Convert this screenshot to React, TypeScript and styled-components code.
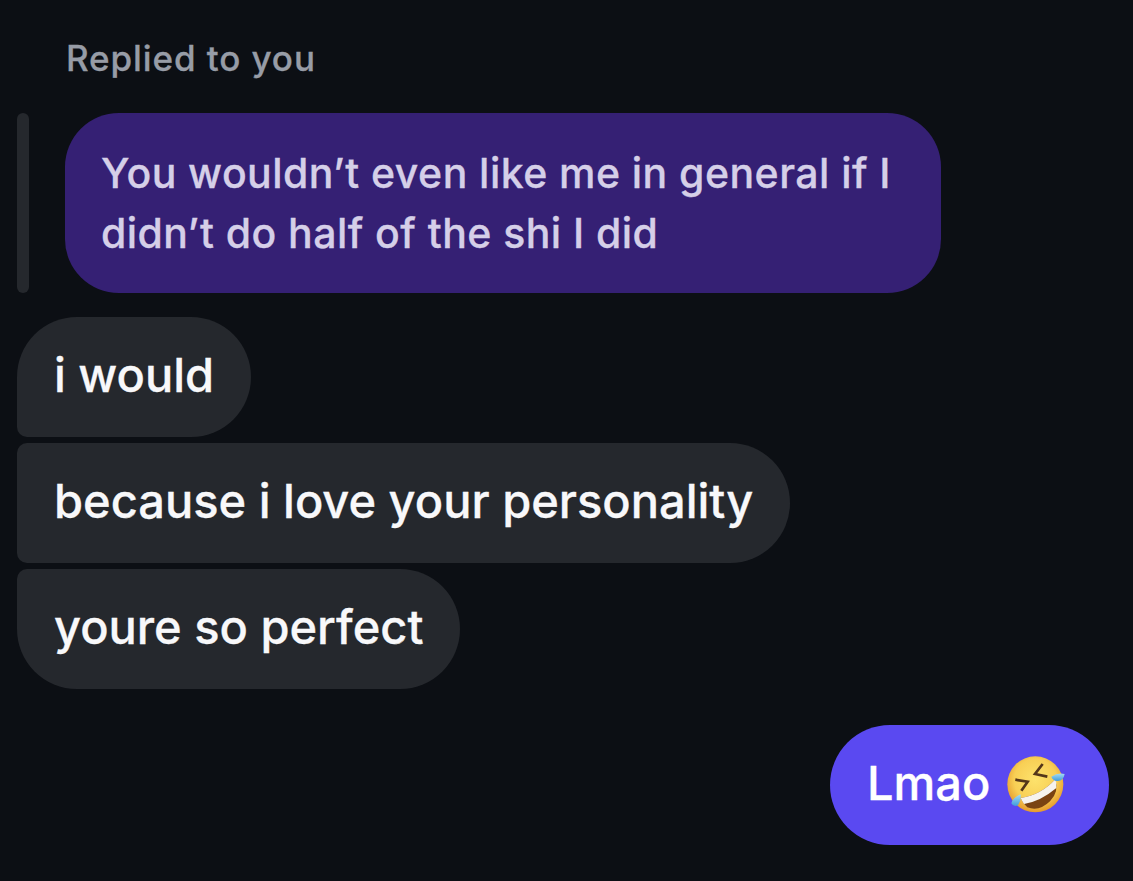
import React from 'react'
import styled, { createGlobalStyle } from 'styled-components'

const GlobalStyle = createGlobalStyle`
  html, body {
    margin: 0;
    padding: 0;
    background-color: #0c0f14;
  }
`

const LaughEmoji = () => (
  <EmojiSvg viewBox="0 0 240 225">
    <defs>
      <radialGradient id="face" cx="50%" cy="42%" r="58%">
        <stop offset="0%" stopColor="#fde26c" />
        <stop offset="65%" stopColor="#f8cf55" />
        <stop offset="100%" stopColor="#e59a2c" />
      </radialGradient>
      <linearGradient id="tear" x1="0" y1="0" x2="0" y2="1">
        <stop offset="0%" stopColor="#a6dcf2" />
        <stop offset="100%" stopColor="#3f9bdc" />
      </linearGradient>
    </defs>
    <circle cx="124" cy="115" r="84" fill="url(#face)" />
    <path d="M80 156 Q140 148 184 100 Q196 138 168 166 Q135 198 100 184 Q87 174 80 156Z" fill="#7a4312" />
    <path d="M80 156 Q140 148 184 100 Q189 112 187 126 Q140 166 90 174 Q84 165 80 156Z" fill="#f6f3ee" />
    <path d="M64 101 L101 107 L82 134" fill="none" stroke="#54361a" strokeWidth="8" />
    <path d="M146 54 L123 84 L160 92" fill="none" stroke="#54361a" strokeWidth="8" />
    <path d="M172 92 Q192 78 212 84 Q208 106 190 105 Q176 104 172 92Z" fill="url(#tear)" />
    <path d="M80 145 Q82 165 72 178 Q58 184 52 172 Q56 155 80 145Z" fill="url(#tear)" />
  </EmojiSvg>
)

const App = () => {
  return (
    <Page>
      <GlobalStyle />
      <ReplyLabel>Replied to you</ReplyLabel>
      <QuoteRow>
        <QuoteBar />
        <QuoteBubble>
          You wouldn’t even like me in general if I
          <br />
          didn’t do half of the shi I did
        </QuoteBubble>
      </QuoteRow>
      <ReceivedGroup>
        <ReceivedBubble $position="first">i would</ReceivedBubble>
        <ReceivedBubble $position="middle">because i love your personality</ReceivedBubble>
        <ReceivedBubble $position="last">youre so perfect</ReceivedBubble>
      </ReceivedGroup>
      <SentRow>
        <SentBubble>
          Lmao
          <LaughEmoji />
        </SentBubble>
      </SentRow>
    </Page>
  )
}

const Page = styled.div`
  width: 1133px;
  height: 881px;
  box-sizing: border-box;
  padding: 38px 24px 0 17px;
  overflow: hidden;
  display: flex;
  flex-direction: column;
  background-color: #0c0f14;
  font-family: Inter, 'Liberation Sans', sans-serif;
`

const ReplyLabel = styled.div`
  margin-left: 49px;
  height: 40px;
  font-size: 35px;
  line-height: 40px;
  font-weight: 500;
  letter-spacing: 0.9px;
  -webkit-text-stroke: 0.3px #979ca6;
  color: #979ca6;
`

const QuoteRow = styled.div`
  margin-top: 35px;
  display: flex;
  gap: 36px;
`

const QuoteBar = styled.div`
  width: 12px;
  height: 180px;
  border-radius: 6px;
  background-color: #25282d;
`

const QuoteBubble = styled.div`
  box-sizing: border-box;
  width: 876px;
  height: 180px;
  padding: 30px 36px;
  border-radius: 54px;
  font-size: 41px;
  line-height: 60px;
  font-weight: 500;
  letter-spacing: 0.45px;
  -webkit-text-stroke: 0.3px #d5cfe8;
  white-space: nowrap;
  background-color: #352074;
  color: #d5cfe8;
`

const ReceivedGroup = styled.div`
  margin-top: 24px;
  display: flex;
  flex-direction: column;
  align-items: flex-start;
  gap: 6px;
`

const bubbleRadius = {
  first: '60px 60px 60px 10px',
  middle: '10px 60px 60px 10px',
  last: '10px 60px 60px 60px',
}

const ReceivedBubble = styled.div<{ $position: 'first' | 'middle' | 'last' }>`
  box-sizing: border-box;
  height: 120px;
  padding: 28px 37px 32px;
  border-radius: ${({ $position }) => bubbleRadius[$position]};
  font-size: 47px;
  line-height: 60px;
  font-weight: 500;
  -webkit-text-stroke: 0.3px #f8f8fa;
  white-space: nowrap;
  background-color: #25282d;
  color: #f8f8fa;
`

const SentRow = styled.div`
  margin-top: 36px;
  display: flex;
  justify-content: flex-end;
`

const SentBubble = styled.div`
  box-sizing: border-box;
  width: 279px;
  height: 120px;
  padding: 0 37px 4px;
  border-radius: 60px;
  display: flex;
  align-items: center;
  font-size: 47px;
  line-height: 60px;
  font-weight: 500;
  -webkit-text-stroke: 0.3px #ffffff;
  background-color: #5a49f1;
  color: #ffffff;
`

const EmojiSvg = styled.svg`
  width: 80px;
  height: 75px;
  flex-shrink: 0;
  margin-left: 4px;
`

export default App
